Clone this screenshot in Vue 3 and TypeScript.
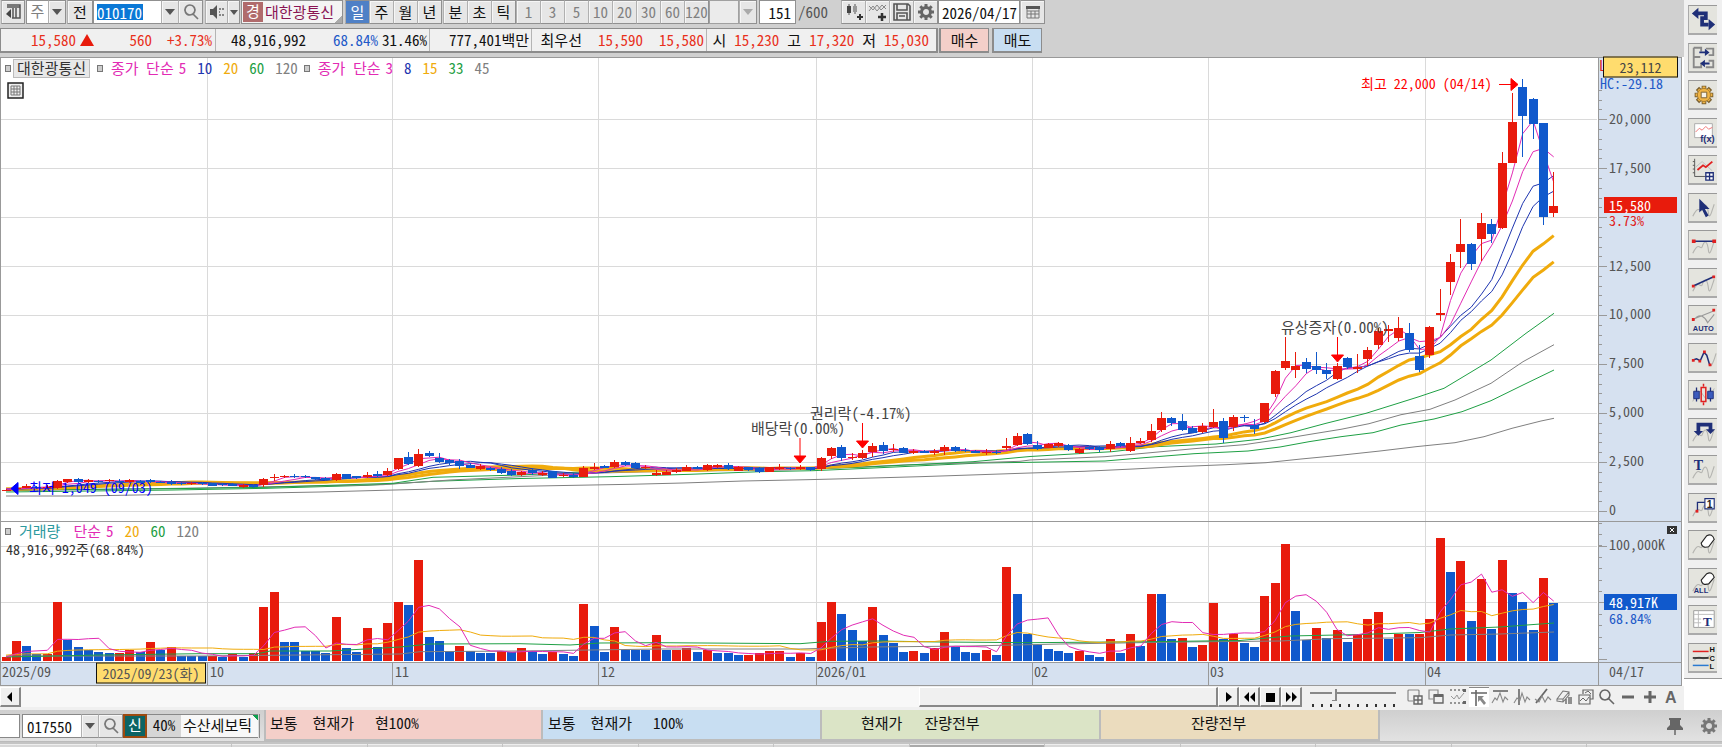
<script setup lang="ts">
import { ref } from 'vue'

type Shape = { d?: string; s?: string; f?: string; w?: number; t?: string; x?: number; y?: number; z?: number; serif?: boolean }
type Mark = { text: string; x: number; y: number; cls?: string }

/* ---------- chart space ---------- */
const X0 = 0
const Y0 = 57
const W = 1684
const H = 629
const viewBox = `${X0} ${Y0} ${W} ${H}`
const ZERO = 511.3
const VBASE = 660.7
const STEP = 10.318
const bx = (i: number) => 6 + i * STEP
const place = (m: { x: number; y: number }) => ({ left: `${((m.x - X0) / W) * 100}%`, top: `${((m.y - Y0) / H) * 100}%` })

/* direction, high, body top, body bottom, low; measured down from the segment's own level */
const segments: { level: number; rows: string }[] = [
  {
    level: 334,
    rows: `R 268 269 271 272|R 260 264 268 270|R 252 258 263 265|B 258 261 265 267|R 256 260 264 266|R 240 242 264 266|R 237 238 246 248|B 234 238 246 250|R 238 239 247 249|B 239 243 247 249|R 236 239 244 247|B 238 242 246 248|R 237 240 246 248|B 239 243 248 250|B 236 240 247 250|B 242 245 248 250|B 240 246 251 256|B 247 249 253 255|R 247 249 253 256|B 247 249 253 255|B 248 250 257 259|B 250 252 255 258|B 248 251 257 259|R 252 256 260 264|B 254 256 262 264|R 235 238 256 262|R 223 230 234 244|R 225 229 232 235|B 222 228 232 234|B 225 227 232 234|B 230 232 238 240|B 232 234 239 241|R 219 223 240 242|B 222 223 236 238|B 227 229 234 236|R 215 224 230 233|B 214 222 228 230|R 205 212 226 229|R 174 174 206 210|B 155 171 192 195|R 148 163 197 200|B 154 158 167 172|B 158 174 185 188|B 176 180 190 194|B 178 184 199 206|B 188 194 203 205|R 193 198 207 209|B 200 205 210 214|B 202 207 218 222|B 208 213 226 228|R 212 216 226 228`,
  },
  {
    level: 394,
    rows: `B 265 270 278 284|R 274 280 286 288|B 272 274 293 295|R 278 284 288 290|B 280 286 291 293|R 258 264 290 292|R 250 262 266 270|B 254 258 263 265|R 241 245 262 264|B 244 246 256 258|B 246 249 264 268|R 254 260 264 266|R 270 280 285 287|R 270 276 284 286|R 264 270 276 280|R 256 260 272 274|B 258 262 266 268|R 252 256 270 272|R 252 254 261 263|B 250 254 267 269|R 258 261 272 274|B 260 262 270 272|B 260 264 277 279|R 260 262 275 277|R 252 262 267 269|B 260 263 267 269|R 256 262 268 270|B 260 262 270 272|R 230 234 268 272|R 200 205 228 236|B 196 200 234 244|R 218 230 234 240|R 210 219 234 236|R 189 197 217 230|B 185 194 214 222|R 192 206 210 215|B 200 205 218 220|R 208 212 219 222|B 211 213 218 220|R 207 213 218 224|R 196 200 213 226|B 198 200 214 216|B 204 209 214 216|B 211 213 218 220|R 208 215 219 226|B 210 215 219 222|R 173 198 204 210|R 158 167 196 198|B 158 163 193 196`,
  },
  {
    level: 634,
    rows: `B 424 435 446 450|R 430 432 443 445|R 426 430 437 442|B 432 434 451 453|R 443 447 460 462|B 438 440 448 450|B 438 440 449 455|R 422 433 447 455|B 426 430 438 440|R 411 430 452 455|R 414 422 430 432|R 373 392 420 427|R 336 354 390 396|B 350 354 368 378|B 343 362 390 392|B 378 383 398 400|R 370 379 395 400|R 328 366 382 384|B 354 362 413 430|R 346 351 381 394|B 344 351 354 366|B 358 375 387 403|R 308 310 365 370|R 210 212 282 292|R 111 182 203 210|R 155 197 210 233|B 174 185 206 220|B 155 197 210 223|B 188 209 222 238|R 190 197 237 241|B 172 174 200 206|R 163 202 206 220|R 140 149 177 198|R 84 93 135 146|R 76 86 92 125|R 50 85 113 124|B 69 100 150 155|B 134 167 210 216|R 78 80 165 174`,
  },
  {
    level: 1384,
    rows: `R 717 790 795 814|R 613 635 697 736|R 508 583 607 654|B 579 583 641 660|R 489 519 567 632|B 508 523 551 578|R 305 340 533 536|R 128 215 338 340|B 87 110 199 322|B 145 148 221 266|B 218 219 502 525|R 365 467 488 502`,
  },
]
const candles = segments.flatMap((seg) =>
  seg.rows.split('|').map((row) => {
    const [dir, ...nums] = row.split(' ')
    const [high, top, bottom, low] = nums.map((v) => ZERO - (seg.level - Number(v)) / 3)
    return { up: dir === 'R', high, top, bottom, low, close: dir === 'R' ? top : bottom }
  }),
)

const volumeRows =
  'R440 R392 B407 B433 R433 R276 B390 B411 B421 B427 B430 R430 R421 B427 R396 B419 R411 B439 B439 B439 R437 B440 R432 B440 R430 R291 R245 B396 B396 B424 B424 B430 R321 B415 B427 R355 B410 R340 R277 B284 R149 B381 B393 B424 R407 B424 B430 B430 R424 B427 R415 B424 B432 R427 B431 B437 R283 B347 B426 R350 B420 B420 B420 R374 B420 R421 R415 B426 R421 B430 B430 B436 R436 R430 R422 R422 B440 R429 B440 R336 R276 B313 B361 B392 R290 B374 B398 B426 R422 B430 R415 R366 B412 B426 B430 R421 B436 R170 B253 B372 B406 B418 B422 B430 R422 B436 B440 R388 B430 R373 B409 R253 B253 B388 R384 B410 R406 R280 B386 R371 B400 B410 R257 R219 R103 B302 B390 R355 B384 R361 B395 R376 R328 R305 B386 R371 B373 R373 R328 R84 B185 R152 B332 R208 B356 R149 B250 B275 B359 R204 B279'
const volumes = volumeRows.split(' ').map((v) => ({ up: v[0] === 'R', y: 510 + Number(v.slice(1)) / 3 }))

function average(values: number[], span: number, before: number): string {
  return values
    .map((_, i) => {
      let sum = 0
      for (let k = i - span + 1; k <= i; k++) sum += k < 0 ? before : values[k]
      return `${bx(i).toFixed(1)},${(sum / span).toFixed(1)}`
    })
    .join(' ')
}
const closes = candles.map((c) => c.close)
const vols = volumes.map((v) => v.y)

const priceLines = [
  { color: '#808080', w: 1, points: '6,496 83,496 153,494.7 247,493.3 320,492 383,490.3 423,489.3 467,488 520,486.3 630,484.3 683,483 743,481 807,479.7 847,478.7 920,476.7 980,474.7 1030,473 1084,471.3 1133,469 1176,466.7 1226,464.7 1266,462.7 1301,459 1340,455.3 1380,451 1416,446.7 1455,442.7 1484,436.7 1512,428.3 1541,421 1554,418.3' },
  { color: '#1fa045', w: 1, points: '6,492 173,490 267,488.3 367,485.3 433,481.3 520,478.5 610,476.7 690,474.3 760,471.7 813,470.7 867,468.3 937,465 980,463 1030,462.3 1105,461 1144,457.7 1194,453.7 1248,451 1280,447 1309,441.7 1341,436.7 1373,432.7 1401,425 1434,419 1462,411.7 1491,400.7 1523,385 1554,370' },
  { color: '#808080', w: 1, points: '6,490.7 200,488 383,484.7 450,480 520,476.7 587,473.3 670,471.3 787,470 853,467.3 903,465 1020,461.3 1030,460 1105,456.7 1144,453.3 1194,448.7 1244,444.7 1276,440 1312,434 1341,429.3 1369,423.7 1401,414.7 1430,409.3 1455,400 1491,383.3 1523,361.7 1554,344.7' },
  { color: '#1fa045', w: 1, points: '6,490 173,488.7 267,487.3 393,483.3 433,477.3 520,475 587,471.7 653,470.3 720,469.3 770,469 813,468.7 867,467 973,461.7 1030,456.5 1112,451.7 1155,446.7 1216,444 1259,439.3 1291,432.7 1326,423.3 1366,413.3 1398,403.3 1419,396.7 1444,388.3 1469,373.3 1491,360 1526,333.3 1554,313.3' },
  { color: '#f0ab0c', w: 3, points: average(closes, 20, 489) },
  { color: '#f0ab0c', w: 3, points: average(closes, 15, 489) },
  { color: '#1e35b0', w: 1, points: average(closes, 10, 489) },
  { color: '#1e35b0', w: 1, points: average(closes, 8, 489) },
  { color: '#e22bb4', w: 1, points: average(closes, 5, 489) },
  { color: '#e22bb4', w: 1, points: average(closes, 3, 489) },
]
const volumeLines = [
  { color: '#808080', points: '6,656 200,656 300,655 400,654 420,651.7 520,651 590,650 660,649 800,649 870,647 970,646 1060,644 1180,642 1280,641 1330,638.7 1420,637.7 1450,635 1500,634 1554,632' },
  { color: '#1fa045', points: '6,657 100,655 200,653.7 258,653.7 270,651 330,651 400,647 430,644 520,643.7 570,645 600,643 660,642.7 800,643.7 830,641.3 880,641 940,642 1030,642.7 1150,641.7 1240,640.5 1290,636 1360,634.5 1420,632.5 1450,629 1500,627 1554,623' },
  { color: '#f0ab0c', points: average(vols, 20, 655) },
  { color: '#e22bb4', points: average(vols, 5, 657) },
]

/* ---------- axes ---------- */
const gridX = [207.5, 392.5, 598.5, 816.5, 1032.5, 1208.5, 1425.5]
const gridY = [119.7, 168.6, 217.6, 266.5, 315.5, 364.4, 413.4, 462.3, 511.3]
const volGridY = [546.5, 602.5]
const minorTicks: number[] = []
for (let y = 90.4; y < 511; y += 9.79) minorTicks.push(y)
for (let y = 523; y < 660; y += 11.4) minorTicks.push(y)

const axisMarks: Mark[] = [
  { text: 'L', x: 1599, y: 66, cls: 'red' },
  { text: 'HC:-29.18', x: 1600, y: 84, cls: 'blue' },
  { text: '20,000', x: 1609, y: 119 },
  { text: '17,500', x: 1609, y: 168 },
  { text: '12,500', x: 1609, y: 266 },
  { text: '10,000', x: 1609, y: 314 },
  { text: '7,500', x: 1609, y: 363 },
  { text: '5,000', x: 1609, y: 412 },
  { text: '2,500', x: 1609, y: 461 },
  { text: '0', x: 1609, y: 510 },
  { text: '3.73%', x: 1609, y: 221, cls: 'red' },
  { text: '100,000K', x: 1609, y: 545 },
  { text: '68.84%', x: 1609, y: 619, cls: 'blue' },
  { text: '04/17', x: 1609, y: 672 },
  { text: '2025/09', x: 2, y: 672 },
  { text: '10', x: 210, y: 672 },
  { text: '11', x: 395, y: 672 },
  { text: '12', x: 601, y: 672 },
  { text: '2026/01', x: 817, y: 672 },
  { text: '02', x: 1034, y: 672 },
  { text: '03', x: 1210, y: 672 },
  { text: '04', x: 1427, y: 672 },
]
const notes: Mark[] = [
  { text: '최고 22,000 (04/14)', x: 1361, y: 84, cls: 'hot' },
  { text: '최저 1,049 (09/03)', x: 29, y: 488, cls: 'cold' },
  { text: '배당락(0.00%)', x: 751, y: 429, cls: 'event' },
  { text: '권리락(-4.17%)', x: 810, y: 414, cls: 'event' },
  { text: '유상증자(0.00%)', x: 1281, y: 328, cls: 'event' },
]
const tags: Mark[] = [
  { text: '23,112', x: 1603, y: 68, cls: 'cursor' },
  { text: '15,580', x: 1604, y: 206, cls: 'last' },
  { text: '48,917K', x: 1604, y: 603, cls: 'vol' },
]
const eventArrows = [
  { x: 800, top: 438, tip: 463 },
  { x: 862.5, top: 423, tip: 448 },
  { x: 1337.5, top: 337, tip: 362 },
]

const priceLegend = [
  { t: '종가 단순', c: 'pink', v: [['5', 'pink'], ['10', 'navy'], ['20', 'gold'], ['60', 'green'], ['120', 'gray']] },
  { t: '종가 단순', c: 'pink', v: [['3', 'pink'], ['8', 'navy'], ['15', 'gold'], ['33', 'green'], ['45', 'gray']] },
]
const volumeLegend = [['5', 'pink'], ['20', 'gold'], ['60', 'green'], ['120', 'gray']]

/* ---------- controls ---------- */
const code = ref('010170')
const bars = ref('151')
const date = ref('2026/04/17')
const orderCode = ref('017550')
const zoom = ref(27)
const periods = ['일', '주', '월', '년']
const intraday = ['분', '초', '틱']
const minutes = ['1', '3', '5', '10', '20', '30', '60', '120']

const N = '#1f2f78'
const G = '#b4b4b0'
const R = '#e02020'
const wave = 'M3 24 Q7 15 10 17 T13 17 Q15 11 17 12 T20 22 Q21 26 23 20 L26 11'
const drawTools: { name: string; shapes: Shape[] }[] = [
  { name: '차트 전환', shapes: [{ d: 'M8 8H17V13H13V20H20', s: N, w: 4 }, { d: 'M2 8L9 2V14ZM27 20L20 14V26Z', f: N }] },
  { name: '화면 분할', shapes: [{ d: 'M4 4H12V8M4 4V25H12V20M4 14H11M17 5H25V12H20M17 25H25V18H20', s: '#888', w: 2 }, { d: 'M10 9H17M14 21H21', s: N, w: 2 }, { d: 'M16 5L21 9L16 13ZM16 17L11 21L16 25Z', f: N }] },
  { name: '환경 설정', shapes: [{ d: 'M15 5V25M5 15H25M8 8L22 22M22 8L8 22', s: '#7a6030', w: 5 }, { d: 'M15 6V24M6 15H24M9 9L21 21M21 9L9 21', s: '#f0b444', w: 3 }, { d: 'M15 8A7 7 0 1 1 14.9 8Z', f: '#f0b444', s: '#a07830', w: 1 }, { d: 'M12 12H18V18H12Z', f: '#f6f2e6', s: '#7a6030', w: 1 }] },
  { name: '수식 관리', shapes: [{ d: 'M5 5H24V20H5Z', f: '#fff', s: '#aaa', w: 1 }, { d: 'M6 14L10 10L13 12L17 8L20 11L24 9', s: '#f07070', w: 1 }, { t: 'f(x)', x: 11, y: 25, z: 10, f: N }] },
  { name: '지표 추가', shapes: [{ d: 'M5 3V22H17M3 6H5M3 10H5M3 14H5M3 18H5', s: '#555', w: 1 }, { d: 'M6 12L13 6L24 16', s: '#bbb', w: 1 }, { d: 'M8 15L14 10L17 12L24 6', s: R, w: 2 }, { d: 'M17 18H25V26H17ZM21 18V26M17 22H25', s: N, w: 1.4, f: '#fff' }] },
  { name: '선택', shapes: [{ d: wave, s: G, w: 1.2 }, { d: 'M10 5V20L13 17L17 25L20 23L16 16H21Z', f: N }] },
  { name: '수평선', shapes: [{ d: wave, s: G, w: 1.2 }, { d: 'M3 11H26', s: N, w: 1.6 }, { d: 'M2 9H6V13H2ZM24 9H28V13H24Z', f: R }] },
  { name: '추세선', shapes: [{ d: wave, s: G, w: 1.2 }, { d: 'M4 18L26 8', s: N, w: 1.6 }, { d: 'M2 17H5V20H2ZM24 7H27V10H24Z', f: R }] },
  { name: '자동 추세선', shapes: [{ d: 'M4 15Q9 9 13 11T19 18L26 9M4 14L26 5', s: '#999', w: 1.2 }, { d: 'M2 13H5V16H2ZM24 3H27V6H24Z', f: R }, { t: 'AUTO', x: 3, y: 27, z: 8, f: N }] },
  { name: '꺾은선', shapes: [{ d: 'M22 23Q24 24 28 10', s: G, w: 1.2 }, { d: 'M4 17L7 16L11 18L15 9L18 12L21 22', s: N, w: 1.6 }, { d: 'M2 16H5V19H2ZM9 17H12V20H9ZM14 7H17V10H14ZM20 21H23V24H20Z', f: R }] },
  { name: '봉 패턴', shapes: [{ d: 'M3 22Q9 4 14 15T26 8', s: G, w: 1 }, { d: 'M7 7V22M22 7V22', s: N, w: 1.4 }, { d: 'M4 11H10V19H4ZM19 11H25V19H19Z', f: '#3b5bbd', s: N, w: 1 }, { d: 'M14.500 3V6M14.500 23V26M12 7H17V22H12Z', s: R, w: 1.6 }] },
  { name: '되돌림', shapes: [{ d: wave, s: G, w: 1.2 }, { d: 'M9 14V6H22V12', s: N, w: 4 }, { d: 'M4 13H14L9 18ZM17 11H27L22 16Z', f: N }] },
  { name: '글자 넣기', shapes: [{ d: wave, s: G, w: 1.2 }, { t: 'T', x: 4, y: 15, z: 15, f: N, serif: true }] },
  { name: '번호 넣기', shapes: [{ d: wave, s: G, w: 1.2 }, { d: 'M8 18V9H16', s: N, w: 1.4 }, { d: 'M6 17H9V20H6Z', f: R }, { d: 'M16 5H26V16H16Z', f: '#fff', s: N, w: 1.2 }, { t: '1', x: 18, y: 15, z: 11, f: '#222' }] },
  { name: '지우개', shapes: [{ d: wave, s: G, w: 1.2 }, { d: 'M12 13L18 5Q24 2 26 9L20 17Q13 19 12 13Z', f: '#fff', s: '#222', w: 1.2 }] },
  { name: '모두 지우기', shapes: [{ d: wave, s: G, w: 1.2 }, { d: 'M12 12L18 5Q24 2 26 9L20 16Q13 18 12 12Z', f: '#fff', s: '#222', w: 1.2 }, { t: 'ALL', x: 4, y: 26, z: 8, f: N }] },
  { name: '데이터 표', shapes: [{ d: 'M4 5H26V23H4Z', f: '#fff', s: '#999', w: 1 }, { d: 'M4 9H26M4 14H12M4 18H12M9 5V23', s: '#bbb', w: 1 }, { t: 'T', x: 14, y: 22, z: 14, f: N, serif: true }] },
  { name: '고저종 표시', shapes: [{ d: 'M4 18Q9 12 12 15T22 12', s: G, w: 1.2 }, { d: 'M3 8H20', s: R, w: 1.6 }, { d: 'M3 15H20', s: '#111', w: 1.6 }, { d: 'M3 23H20', s: '#2a7ad0', w: 1.6 }, { t: 'H', x: 21, y: 9, z: 8, f: '#111' }, { t: 'C', x: 21, y: 18, z: 8, f: '#111' }, { t: 'L', x: 21, y: 27, z: 8, f: '#111' }] },
]

const K = '#666'
const footTools: { name: string; on?: boolean; shapes: Shape[] }[] = [
  { name: '창 추가', shapes: [{ d: 'M13 8V3Q13 2 12 2H3Q2 2 2 3V12Q2 13 3 13H7', s: '#888', w: 1.2 }, { d: 'M8 8H16V16H8ZM12 8V16M8 12H16', s: K, w: 1.4 }] },
  { name: '창 겹치기', shapes: [{ d: 'M11 6V2H2V11H6', s: '#888', w: 1.2 }, { d: 'M7 7H16V15H7Z', s: K, w: 1.4 }, { d: 'M7 6H16V9H7Z', f: K }] },
  { name: '영역 보기', shapes: [{ d: 'M1 2H3M5 2H7M9 2H11M13 2H15M1 15H3M5 15H7M9 15H11M13 15H15', s: '#777', w: 1.5 }, { d: 'M2 8L5 11L8 7L10 11L15 5', s: '#999', w: 1 }, { d: 'M14 1H17V4H14ZM14 13H17V16H14Z', f: K }] },
  { name: '십자선', on: true, shapes: [{ d: 'M1 4H17M6 1V17', s: K, w: 1.6 }, { d: 'M8 7H14L12 9L16 14L14 16L10 11L8 13Z', f: '#888' }] },
  { name: '가로선', shapes: [{ d: 'M2 3H17', s: K, w: 1.6 }, { d: 'M1 15L4 10L6 12L9 5L12 14L14 9L17 12', s: '#888', w: 1.1 }] },
  { name: '세로선', shapes: [{ d: 'M6 1V17', s: K, w: 1.6 }, { d: 'M1 15L4 10L7 12L9 5L12 14L14 9L17 12', s: '#888', w: 1.1 }] },
  { name: '사선', shapes: [{ d: 'M2 15L13 1', s: K, w: 1.8 }, { d: 'M1 11L5 14L8 8L11 14L14 9L17 12', s: '#888', w: 1.1 }] },
  { name: '전체 삭제', shapes: [{ d: 'M2 11L8 3L14 4V7L8 14L2 13ZM2 11L8 11L14 4M8 11V14', s: '#777', w: 1.1 }, { d: 'M11 11V16M14 9V16M16 9V16', s: K, w: 1.4 }] },
  { name: '차트 복사', shapes: [{ d: 'M6 6V2H16V11H13', s: K, w: 1.2 }, { d: 'M2 7H13V16H2Z', s: K, w: 1.2 }, { d: 'M3 13L6 10L9 13L12 9M8 5L11 3L14 6', s: K, w: 1 }] },
  { name: '돋보기', shapes: [{ d: 'M7 2A5 5 0 1 1 6.9 2ZM11 11L16 16', s: K, w: 1.6 }] },
  { name: '축소', shapes: [{ d: 'M3 9H15', s: K, w: 3 }] },
  { name: '확대', shapes: [{ d: 'M3 9H15M9 3V15', s: K, w: 3 }] },
  { name: '자동', shapes: [{ t: 'A', x: 3, y: 15, z: 16, f: K }] },
]
const play: { name: string; d: string }[] = [
  { name: '재생', d: 'M7 4L13 9L7 14Z' },
  { name: '뒤로', d: 'M9 4L4 9L9 14ZM15 4L10 9L15 14Z' },
  { name: '정지', d: 'M5 5H14V14H5Z' },
  { name: '앞으로', d: 'M4 4L9 9L4 14ZM10 4L15 9L10 14Z' },
]
</script>

<template>
  <div class="app">
    <div class="upper">
      <main class="main">
        <form class="bar" @submit.prevent>
          <button class="b w23" type="button" aria-label="패널 열기">
            <svg width="18" height="18" viewBox="0 0 18 18"><path d="M3 2H16V15H8M16 4H3M9 5V15M12 5V15" stroke="#555" stroke-width="1.5" fill="none" /><path d="M7 6V15L2 11Z" fill="#444" /></svg>
          </button>
          <div class="combo g2">
            <span class="white w22 dim">주</span>
            <button class="b w17" type="button" aria-label="주기 선택"><i class="tri" /></button>
          </div>
          <button class="b w25 g1" type="button">전</button>
          <div class="combo g1">
            <input v-model="code" class="code" aria-label="종목 코드" />
            <button class="b w17" type="button" aria-label="종목 목록"><i class="tri" /></button>
            <button class="b w24" type="button" aria-label="종목 검색">
              <svg width="18" height="18" viewBox="0 0 18 18"><path d="M8 2A5 5 0 1 1 7.900 2ZM11.500 11.500L16 16" stroke="#777" stroke-width="1.700" fill="none" /></svg>
            </button>
          </div>
          <div class="combo g2">
            <button class="b w22" type="button" aria-label="소리">
              <svg width="18" height="18" viewBox="0 0 18 18"><path d="M2 6H5L9 2V16L5 12H2Z" fill="#555" /><path d="M11 6H13M14 6H16M11 12H13M14 12H16M11 9H12" stroke="#666" stroke-width="1.500" /></svg>
            </button>
            <button class="b w13" type="button" aria-label="소리 설정"><i class="tri small" /></button>
          </div>
          <div class="stock g1"><span class="badge">경</span><span class="name">대한광통신</span></div>
          <div class="combo g2">
            <button v-for="(p, i) in periods" :key="p" class="b w24" :class="{ on: i === 0 }" type="button">{{ p }}</button>
          </div>
          <div class="combo g1">
            <button v-for="p in intraday" :key="p" class="b w24" type="button">{{ p }}</button>
          </div>
          <div class="combo">
            <button v-for="m in minutes" :key="m" class="b w24 dim" type="button">{{ m }}</button>
          </div>
          <div class="combo">
            <span class="blank" />
            <button class="b w17" type="button" aria-label="분 선택"><i class="tri pale" /></button>
          </div>
          <input v-model="bars" class="white count g2" aria-label="봉 개수" />
          <span class="total">/600</span>
          <div class="combo tools">
            <button class="b w24" type="button" aria-label="차트 유형">
              <svg width="20" height="20" viewBox="0 0 20 20"><path d="M5 2V13M11 2V12" stroke="#555" /><path d="M3 4H7V11H3Z" fill="#444" /><path d="M9 4H13V10H9Z" fill="#999" /><path d="M16 12V18M13 15H19" stroke="#333" stroke-width="2" /></svg>
            </button>
            <button class="b w24" type="button" aria-label="지표 추가">
              <svg width="20" height="20" viewBox="0 0 20 20"><path d="M1 9L5 4L9 9L14 3L18 7M1 4L5 8L9 3L13 8L18 3" stroke="#888" fill="none" /><path d="M14 11V19M10 15H18" stroke="#333" stroke-width="2.500" /></svg>
            </button>
            <button class="b w24" type="button" aria-label="저장">
              <svg width="18" height="18" viewBox="0 0 18 18"><path d="M1 1H15L17 3V17H1ZM4 1V7H14V1M4 17V10H14V17M6 13H12" stroke="#555" stroke-width="1.600" fill="none" /></svg>
            </button>
            <button class="b w24" type="button" aria-label="설정">
              <svg width="18" height="18" viewBox="0 0 18 18"><circle cx="9" cy="9" r="4.500" fill="none" stroke="#666" stroke-width="3" /><path d="M9 1V4M9 14V17M1 9H4M14 9H17M3.300 3.300L5.500 5.500M12.500 12.500L14.700 14.700M14.700 3.300L12.500 5.500M5.500 12.500L3.300 14.700" stroke="#666" stroke-width="3" /></svg>
            </button>
          </div>
          <div class="combo">
            <input v-model="date" class="date" aria-label="기준일" />
            <button class="b w24" type="button" aria-label="달력">
              <svg width="18" height="18" viewBox="0 0 18 18"><path d="M3 4H15V15H3ZM3 8H15M7 8V15M11 8V15M3 11H15" stroke="#777" fill="none" /><path d="M2 3H16V6H2Z" fill="#555" /></svg>
            </button>
          </div>
        </form>

        <div class="bar quote">
          <div class="panel">
            <div class="cell c1 red"><span>15,580</span><i class="up" /><span>560</span><span>+3.73%</span></div>
            <div class="cell c2"><span>48,916,992</span><span class="blue">68.84%</span><span>31.46%</span></div>
            <div class="cell c3"><span>777,401백만</span></div>
            <div class="cell c4"><span>최우선</span><span class="red">15,590</span><span class="red">15,580</span></div>
            <div class="cell c5"><span>시</span><span class="red">15,230</span><span>고</span><span class="red">17,320</span><span>저</span><span class="red">15,030</span></div>
          </div>
          <button class="trade buy" type="button">매수</button>
          <button class="trade sell" type="button">매도</button>
        </div>

        <section class="chart" aria-label="주가 차트">
          <svg class="plot" :viewBox="viewBox" preserveAspectRatio="none">
            <rect x="0" y="57" width="1684" height="629" fill="#fff" />
            <rect x="1598" y="57" width="83" height="629" fill="#d6e1f0" />
            <rect x="0" y="662" width="1681" height="23" fill="#d6e1f0" />
            <g class="crisp" stroke="#dadada">
              <line v-for="x in gridX" :key="x" :x1="x" :x2="x" y1="58" y2="661" />
              <line v-for="y in [...gridY, ...volGridY]" :key="y" x1="1" x2="1597" :y1="y" :y2="y" />
            </g>
            <g class="crisp">
              <rect v-for="(v, i) in volumes" :key="i" :x="bx(i) - 4.5" :y="v.y" width="9" :height="VBASE - v.y" :fill="v.up ? '#e81b0c' : '#1059cc'" />
            </g>
            <polyline v-for="(l, i) in volumeLines" :key="'v' + i" :points="l.points" :stroke="l.color" fill="none" />
            <polyline v-for="(l, i) in priceLines" :key="'p' + i" :points="l.points" :stroke="l.color" :stroke-width="l.w" fill="none" />
            <g v-for="(c, i) in candles" :key="'c' + i" class="crisp" :fill="c.up ? '#e81b0c' : '#1059cc'">
              <rect :x="bx(i) - 0.5" :y="c.high" width="1" :height="c.low - c.high" />
              <rect :x="bx(i) - 4.5" :y="c.top" width="9" :height="Math.max(1, c.bottom - c.top)" />
            </g>
            <g class="crisp" stroke="#999" fill="none">
              <path d="M0 57.500H1681.500V685.500H0.500V57.500M0 521.500H1681M0 662.500H1681M1598.500 57V685" />
              <path v-for="x in gridX" :key="x" :d="`M${x} 662V685`" />
              <path v-for="y in minorTicks" :key="y" :d="`M1599 ${y}H1602`" />
              <path v-for="y in [...gridY, ...volGridY, 659.5]" :key="y" :d="`M1599 ${y}H1607`" />
            </g>
            <g fill="#f00" stroke="#f00">
              <path v-for="a in eventArrows" :key="a.x" :d="`M${a.x} ${a.top}V${a.tip - 7}M${a.x - 6} ${a.tip - 7}H${a.x + 6}L${a.x} ${a.tip}Z`" />
              <path d="M1499 84.500H1511M1511 78.500V90.500L1518 84.500Z" />
            </g>
            <path d="M11 488.500L18 482.500V494.500Z" fill="#00f" stroke="#00f" />
          </svg>
          <div class="legend top">
            <i class="sq" /><span class="title">대한광통신</span>
            <template v-for="(l, k) in priceLegend" :key="k">
              <i class="sq" /><span :class="l.c" class="series">{{ l.t }}</span>
              <span v-for="v in l.v" :key="v[0]" :class="v[1]" class="num">{{ v[0] }}</span>
            </template>
          </div>
          <button class="grid-btn" type="button" aria-label="표 보기">
            <svg width="17" height="17" viewBox="0 0 17 17"><path d="M1 1H16V16H1Z" fill="#eee" stroke="#222" stroke-width="1.500" /><path d="M4 4H13V13H4ZM4 7H13M4 10H13M7 4V13M10 4V13" fill="none" stroke="#777" /></svg>
          </button>
          <div class="legend low" :style="place({ x: 0, y: 521 })">
            <i class="sq" /><span class="teal series">거래량</span><span class="pink series">단순</span>
            <span v-for="v in volumeLegend" :key="v[0]" :class="v[1]" class="num">{{ v[0] }}</span>
          </div>
          <span class="mark dark" :style="place({ x: 6, y: 550 })">48,916,992주(68.84%)</span>
          <span v-for="m in axisMarks" :key="m.text + m.x" class="mark" :class="m.cls" :style="place(m)">{{ m.text }}</span>
          <span v-for="m in notes" :key="m.text" class="mark" :class="m.cls" :style="place(m)">{{ m.text }}</span>
          <span v-for="m in tags" :key="m.text" class="mark tag" :class="m.cls" :style="place(m)">{{ m.text }}</span>
          <span class="mark tag day" :style="place({ x: 96, y: 674 })">2025/09/23(화)</span>
          <button class="close" type="button" aria-label="거래량 닫기" :style="place({ x: 1667, y: 530 })">
            <svg width="10" height="8" viewBox="0 0 10 8"><path d="M0 0H10V8H0Z" fill="#333" /><path d="M3 2L7 6M7 2L3 6" stroke="#fff" /></svg>
          </button>
        </section>

        <div class="scroll">
          <button class="sb" type="button" aria-label="왼쪽으로"><svg width="18" height="18" viewBox="0 0 18 18"><path d="M11 4V14L6 9Z" /></svg></button>
          <div class="track"><div class="thumb" /></div>
          <button v-for="p in play" :key="p.name" class="sb" type="button" :aria-label="p.name"><svg width="18" height="18" viewBox="0 0 18 18"><path :d="p.d" /></svg></button>
          <input v-model="zoom" class="slider" type="range" min="0" max="100" aria-label="확대 비율" />
          <div class="foot">
            <button v-for="t in footTools" :key="t.name" type="button" :aria-label="t.name" :class="{ lit: t.on }">
              <svg width="18" height="18" viewBox="0 0 18 18">
                <template v-for="(s, i) in t.shapes" :key="i">
                  <text v-if="s.t" :x="s.x" :y="s.y" :font-size="s.z" :fill="s.f" class="itext">{{ s.t }}</text>
                  <path v-else :d="s.d" :stroke="s.s || 'none'" :fill="s.f || 'none'" :stroke-width="s.w" />
                </template>
              </svg>
            </button>
          </div>
        </div>
      </main>

      <aside class="side">
        <div class="stack">
          <button v-for="t in drawTools" :key="t.name" type="button" :aria-label="t.name">
            <svg width="27" height="27" viewBox="0 0 29 29">
              <template v-for="(s, i) in t.shapes" :key="i">
                <text v-if="s.t" :x="s.x" :y="s.y" :font-size="s.z" :fill="s.f" :class="s.serif ? 'iserif' : 'itext'">{{ s.t }}</text>
                <path v-else :d="s.d" :stroke="s.s || 'none'" :fill="s.f || 'none'" :stroke-width="s.w" />
              </template>
            </svg>
          </button>
        </div>
        <div class="void" />
      </aside>
    </div>

    <footer class="order">
      <span class="stub" />
      <div class="combo box">
        <input v-model="orderCode" class="ocode" aria-label="주문 종목 코드" />
        <button class="b w17" type="button" aria-label="주문 종목 목록"><i class="tri" /></button>
        <button class="b w24" type="button" aria-label="주문 종목 검색">
          <svg width="18" height="18" viewBox="0 0 18 18"><path d="M8 2A5 5 0 1 1 7.900 2ZM11.500 11.500L16 16" stroke="#777" stroke-width="1.700" fill="none" /></svg>
        </button>
        <span class="shin">신</span><span class="pct">40%</span><span class="oname">수산세보틱</span>
      </div>
      <button class="slot s1" type="button"><span>보통</span><span>현재가</span><span>현100%</span></button>
      <button class="slot s2" type="button"><span>보통</span><span>현재가</span><span>100%</span></button>
      <button class="slot s3" type="button"><span>현재가</span><span>잔량전부</span></button>
      <button class="slot s4" type="button"><span>잔량전부</span></button>
      <div class="ends">
        <button type="button" aria-label="고정"><svg width="18" height="20" viewBox="0 0 18 20"><path d="M3 2H15V4H14V9L17 12V14H1V12L4 9V4H3Z" fill="#666" /><path d="M9 13V19" stroke="#666" stroke-width="1.500" /></svg></button>
        <button type="button" aria-label="주문 설정"><svg width="18" height="18" viewBox="0 0 18 18"><circle cx="9" cy="9" r="4.500" fill="none" stroke="#777" stroke-width="3" /><path d="M9 1V4M9 14V17M1 9H4M14 9H17M3.300 3.300L5.500 5.500M12.500 12.500L14.700 14.700M14.700 3.300L12.500 5.500M5.500 12.500L3.300 14.700" stroke="#777" stroke-width="3" /></svg></button>
      </div>
    </footer>
    <div class="tabs"><i v-for="t in 13" :key="t" :class="{ cur: t === 8 }" /></div>
  </div>
</template>

<style>
body { margin: 0; background: #d0d0d0; }
</style>

<style scoped>
.app, .app button, .app input { font-family: 'Noto Sans Mono CJK KR', 'Noto Sans CJK KR', 'Liberation Mono', monospace; font-size: 15px; line-height: 20px; color: #111; }
.app { display: flex; flex-direction: column; min-height: 100vh; background: #d0d0d0; overflow: hidden; }
.app * { box-sizing: border-box; }
.app button { padding: 0; margin: 0; border: 0; background: none; flex: none; display: flex; align-items: center; justify-content: center; white-space: nowrap; }
.app input { margin: 0; border: 0; padding: 0; border-radius: 0; outline: 0; }
svg { display: block; flex: none; }
.upper { flex: 1; display: flex; min-height: 500px; }
.main { flex: 1; min-width: 0; display: flex; flex-direction: column; }

.bar { display: flex; height: 24px; flex: none; white-space: nowrap; padding-left: 1px; }
.app .b { background: #e6e6e6; border: 1px solid #909090; border-left-color: #b0b0b0; height: 24px; margin-right: -1px; box-shadow: inset 1px 1px #f6f6f6; }
.combo { display: flex; flex: none; padding-right: 1px; }
.bar .g1 { margin-left: 1px; }
.bar .g2 { margin-left: 2px; }
.app .w13 { width: 13px; } .app .w17 { width: 18px; } .app .w22 { width: 23px; } .app .w23 { width: 24px; } .app .w24 { width: 25px; } .app .w25 { width: 26px; }
.app .dim { color: #808080; }
.app .b.on { background: #4f80c6; color: #fff; box-shadow: none; }
.white { background: #fff; border: 1px solid #909090; text-align: center; height: 24px; margin-right: -1px; }
.tri { width: 0; height: 0; border: 5px solid transparent; border-top: 6px solid #555; border-bottom: 0; }
.tri.small { border-width: 5px 4px 0; }
.tri.pale { border-top-color: #aaa; }
.app .code { width: 69px; height: 24px; border: 1px solid #909090; padding-left: 3px; background: linear-gradient(#0a78d6, #0a78d6) 3px 3px / 46px 16px no-repeat #fff; color: #fff; margin-right: -1px; }
.stock { width: 102px; height: 24px; background: linear-gradient(135deg, transparent 81px, #aaa 81px) #f4f4f4; border: 1px solid #909090; display: flex; align-items: center; padding-left: 1px; overflow: hidden; flex: none; }
.badge { background: #b06b6c; color: #fff; width: 20px; height: 20px; text-align: center; line-height: 18px; margin-right: 2px; }
.name { color: #8a1454; }
.blank { width: 30px; height: 24px; border: 1px solid #a0a0a0; background: #ebebeb; }
.app .count { width: 37px; border: 1px solid #909090; text-align: right; padding-right: 4px; }
.total { color: #555; padding: 2px 0 0 2px; width: 45px; }
.app .date { width: 82px; height: 24px; border: 1px solid #909090; padding-left: 3px; }

.quote { margin-top: 4px; margin-bottom: 4px; height: 25px; padding-left: 0; }
.panel { display: flex; width: 938px; background: #f0f0f0; border: 2px solid #8c8c8c; border-width: 1px 2px 2px 1px; flex: none; }
.cell { display: flex; align-items: center; border-right: 1px solid #b4b4b4; padding-right: 2px; justify-content: flex-end; gap: 4px; }
.cell:last-child { border: 0; }
.c1 { width: 215px; } .c2 { width: 214px; } .c3 { width: 102px; } .c4 { width: 175px; gap: 16px; } .c5 { flex: 1; gap: 8px; padding-right: 7px; }
.cell.c1 { padding-right: 3px; }
.c1 > :nth-child(3) { width: 54px; text-align: right; }
.c1 > :nth-child(4) { width: 56px; text-align: right; }
.c2 .blue { width: 68px; text-align: right; }
.up { border: 7px solid transparent; border-bottom: 12px solid #e81b0c; border-top: 0; }
.app .trade { width: 50px; height: 25px; border: 2px solid #8c8c8c; border-width: 1px 1px 2px 2px; background: #f4cfc9; margin-left: 1px; }
.app .sell { background: #c8def2; margin-left: 3px; }
.red { color: #e8301c; }
.blue { color: #1f5ac8; }

.chart { position: relative; flex: 1; min-height: 0; }
.plot { position: absolute; inset: 0; width: 100%; height: 100%; }
.crisp { shape-rendering: crispEdges; }
.legend { position: absolute; display: flex; align-items: center; height: 20px; white-space: nowrap; padding-left: 5px; }
.legend.top { top: 1px; left: 0; }
.sq { width: 6px; height: 7px; background: #ccc; border: 1px solid #777; flex: none; }
.title { background: #e8e8e8; border: 1px solid #bbb; height: 19px; line-height: 16px; padding: 0 3px; margin: 0 5px 0 2px; color: #333; }
.series { margin-left: 8px; margin-right: 5px; }
.top .title { margin-right: 7px; }
.num { margin-right: 11px; }
.legend .num:has(+ .sq) { margin-right: 6px; }
.pink { color: #e22bb4; } .navy { color: #1e35b0; } .gold { color: #f0ab0c; } .green { color: #1fa045; } .gray { color: #808080; } .teal { color: #2d9a9e; }
.app .grid-btn { position: absolute; left: 7px; top: 25px; }
.mark { position: absolute; transform: translateY(-50%); white-space: nowrap; font-size: 14px; line-height: 16px; margin-top: -1px; color: #555; }
.mark.red { color: #e02020; } .mark.blue { color: #1f5ac8; } .mark.dark { color: #333; }
.mark.hot { color: #f00; } .mark.cold { color: #00f; }
.mark.event { font-size: 15px; color: #444; }
.mark.last, .mark.vol { width: 73px; background: #e81b0c; color: #fff; padding-left: 5px; }
.mark.vol { background: #1059cc; }
.tag.cursor { width: 75px; height: 21px; border: 1px solid #111; background: #ffdc6e; text-align: center; line-height: 18px; color: #444; }
.tag.day { width: 110px; height: 21px; border: 1px solid #111; background: #ffdc6e; text-align: center; line-height: 18px; }
.app .close { position: absolute; transform: translateY(-50%); }

.scroll { height: 24px; flex: none; display: flex; background: #f0f0f0; padding: 1px 3px 3px 0; }
.app .sb { width: 21px; height: 20px; border: 1px solid #fff; border-right: 2px solid #888; border-bottom: 2px solid #888; background: #f0f0f0; }
.track { flex: 1; display: flex; justify-content: flex-end; background: #f8f8f8; }
.thumb { width: 25%; background: #f0f0f0; border: 1px solid #fff; border-right: 2px solid #888; border-bottom: 2px solid #888; }
.app .slider { appearance: none; width: 86px; height: 20px; margin: 0 9px 0 8px; background: linear-gradient(#888, #888) 0 5px / 100% 2px no-repeat, repeating-linear-gradient(90deg, #333 0 2px, transparent 2px 9px) 2px 17px / 100% 3px no-repeat; }
.slider::-webkit-slider-thumb { appearance: none; width: 5px; height: 12px; margin-top: -4px; background: #f0f0f0; border-right: 2px solid #888; border-bottom: 1px solid #888; }
.foot { display: flex; width: 276px; justify-content: space-between; flex: none; }
.app .foot button { width: 20px; height: 20px; }
.app .foot .lit { background: #fff; border-top: 1px solid #888; }
.itext { font-family: 'Liberation Sans', sans-serif; font-weight: 700; }
.iserif { font-family: 'Liberation Serif', serif; font-weight: 700; }

.side { width: 38px; flex: none; display: flex; flex-direction: column; background: #f0f0f0; }
.stack { flex: 1; display: flex; flex-direction: column; justify-content: space-between; padding: 5px 5px 5px 4px; }
.app .stack button { width: 29px; height: 30px; background: #e4e4de; border: 1px solid #aaa; border-top-color: #999; border-right: 0; border-bottom: 2px solid #aaa; }
.void { height: 32px; border-top: 1px solid #999; background: #fff; flex: none; }

.order { height: 32px; flex: none; display: flex; background: linear-gradient(#cfcfcf, #e2e2e2); border-bottom: 1px solid #bbb; white-space: nowrap; }
.stub { width: 20px; height: 24px; margin-top: 4px; background: #fff; border: 1px solid #888; border-left: 0; }
.box { margin: 4px 4px 0 2px; width: 238px; height: 24px; border-right: 1px solid #888; }
.app .ocode { width: 60px; height: 24px; border: 1px solid #888; padding-left: 4px; margin-right: -1px; }
.shin { width: 24px; height: 24px; border: 2px solid #9c4a10; background: #0c6464; color: #fff; text-align: center; line-height: 18px; margin-left: 1px; flex: none; }
.pct { width: 34px; background: #d6d6d6; border: 1px solid #888; border-width: 1px 0; text-align: center; flex: none; }
.oname { flex: 1; min-width: 0; padding-left: 2px; border: 1px solid #888; border-width: 1px 0; background: linear-gradient(45deg, transparent 0 66px, #0fa050 66px) #f8f8f8; }
.app .slot { flex: 0 1 279px; justify-content: flex-start; align-items: flex-start; padding: 3px 0 0 5px; gap: 15px; border: 1px solid #bcbcbc; border-width: 0 2px 2px 0; }
.app .s1 { background: #f4cfc9; border-left: 2px solid #bcbcbc; padding-left: 4px; }
.app .s1 span:last-child, .app .s2 span:last-child { margin-left: 6px; }
.app .s2 { background: #c8def2; }
.app .s3 { background: #dbe4c6; padding-left: 39px; gap: 22px; }
.app .s4 { background: #ebdcbe; padding-left: 90px; }
.ends { flex: 1; display: flex; justify-content: flex-end; align-items: center; gap: 16px; padding-right: 4px; }
.tabs { height: 5px; flex: none; display: flex; gap: 1px; padding-top: 2px; background: #c4c4c4; margin-left: -39px; }
.tabs i { flex: 1; background: #d8d8d8; border-top: 1px solid #eee; }
.tabs .cur { background: #aaa; }
</style>
